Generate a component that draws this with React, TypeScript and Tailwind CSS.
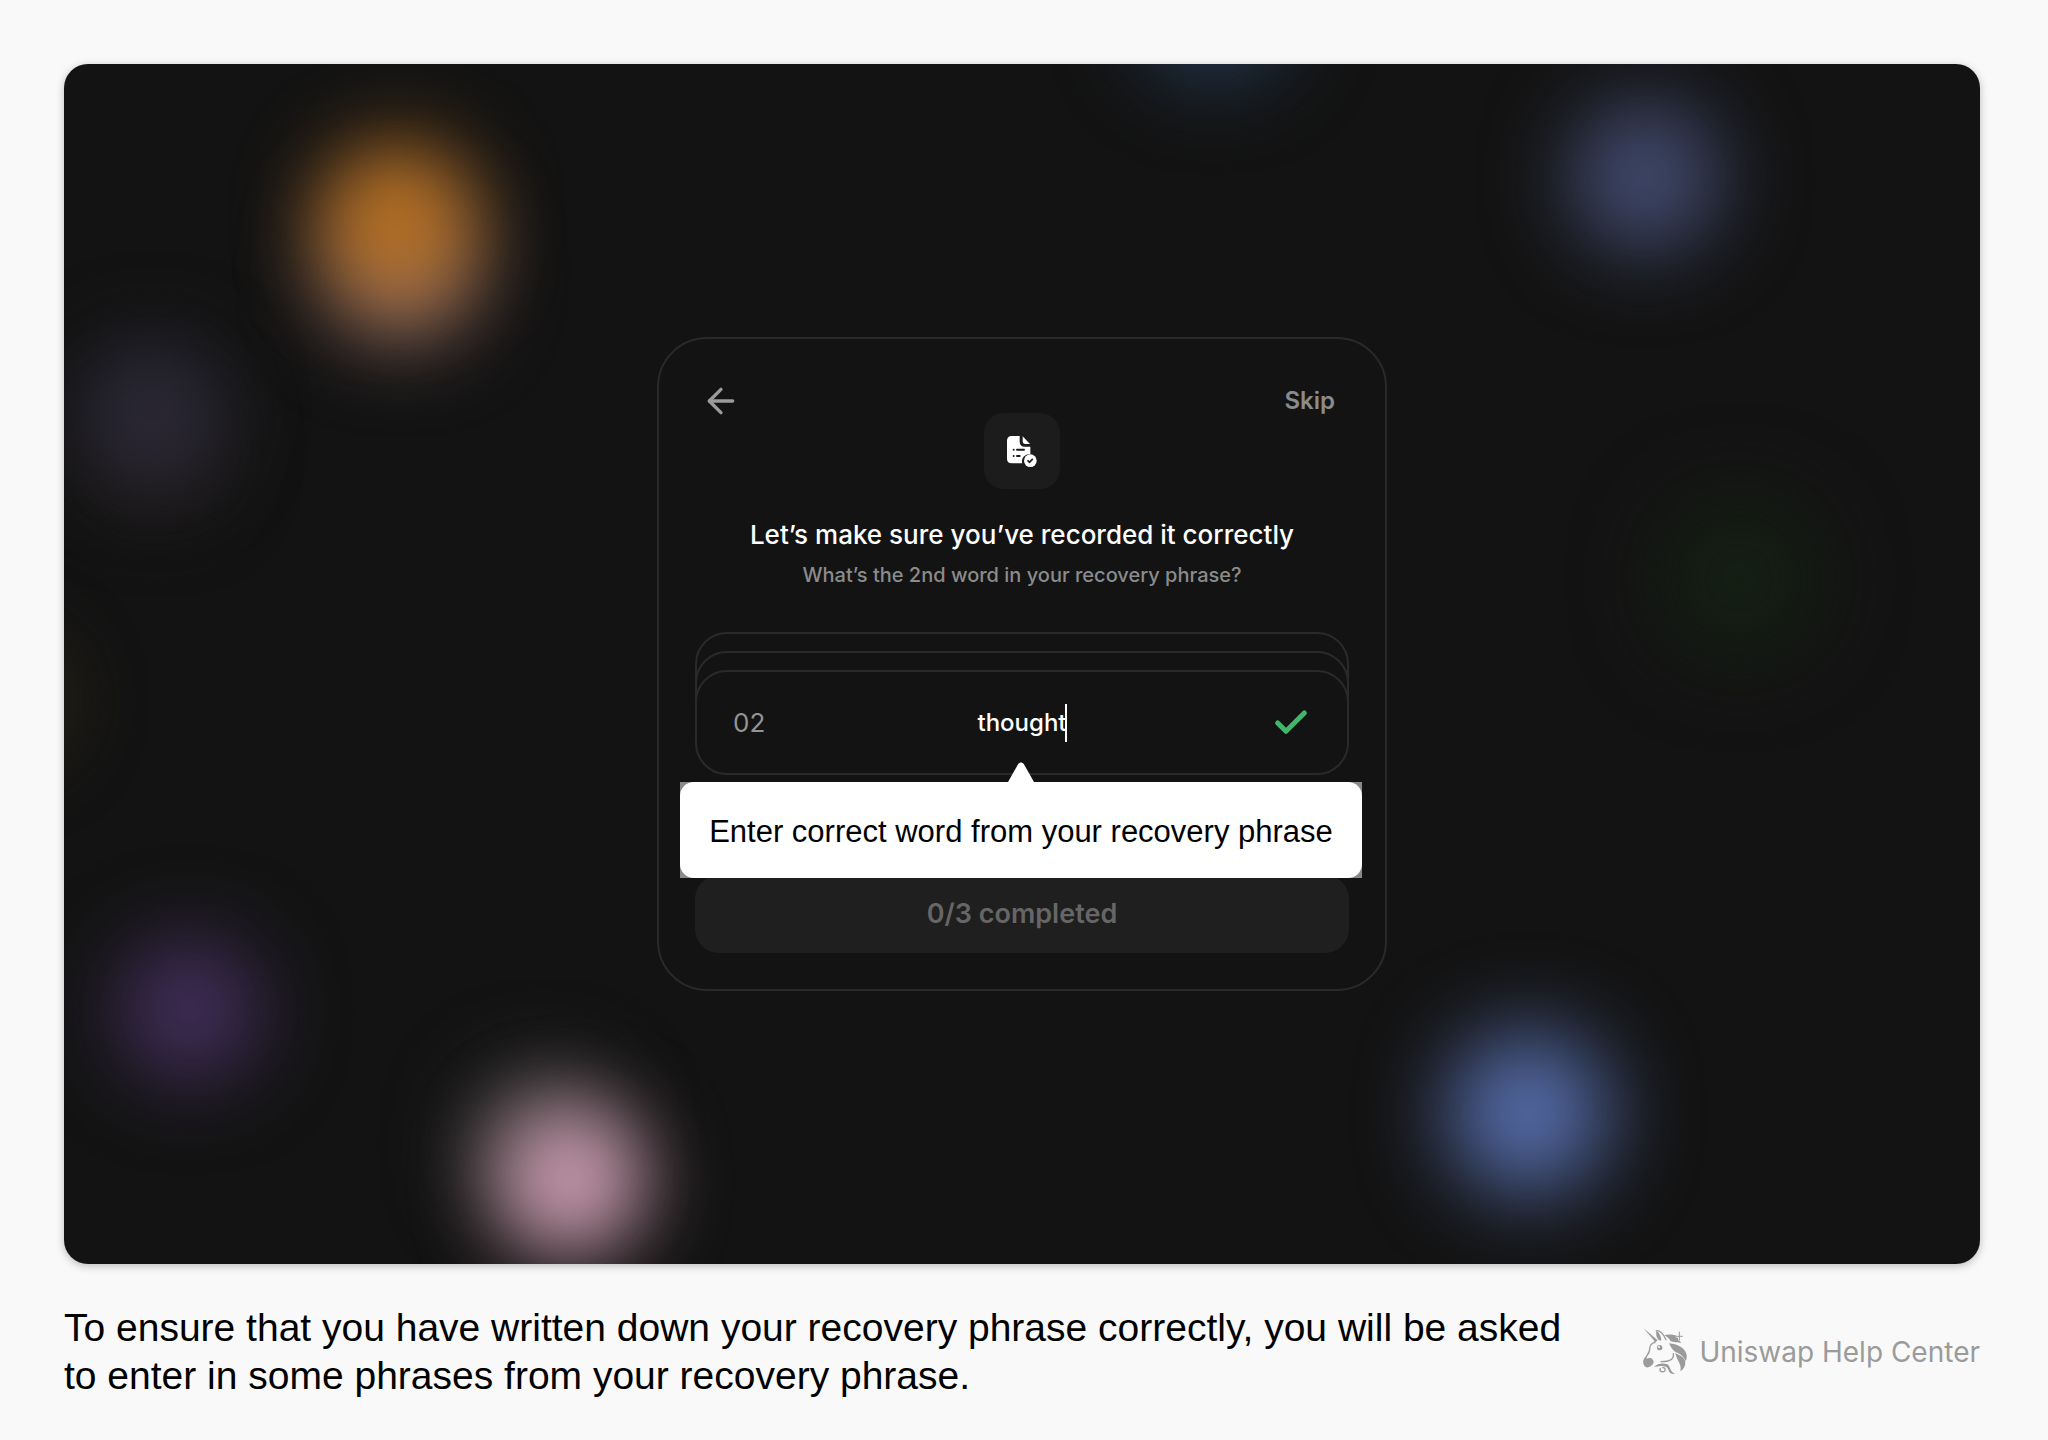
import { ArrowLeft, Check } from 'lucide-react';

function Glow({ className }: { className: string }) {
  return (
    <div
      className={`absolute -translate-x-1/2 -translate-y-1/2 rounded-full ${className}`}
    />
  );
}

function Background() {
  return (
    <div aria-hidden="true" className="absolute inset-0">
      <Glow className="left-[17.6%] top-[17%] size-[140px] bg-[#94706c] blur-[44px]" />
      <Glow className="left-[17.4%] top-[13%] size-[150px] bg-[#c0741f]/95 blur-[42px]" />
      <Glow className="left-[4.8%] top-[32%] size-[120px] bg-[#241e1e] blur-[40px]" />
      <Glow className="left-[4.6%] top-[29%] size-[140px] bg-[#2b2938] blur-[40px]" />
      <Glow className="left-[60%] top-[-5%] size-[160px] bg-[#22364e] blur-[40px]" />
      <Glow className="left-[82.5%] top-[9.4%] size-[150px] bg-[#434c71] blur-[42px]" />
      <Glow className="left-[87.4%] top-[42.8%] size-[150px] bg-[#152113] blur-[44px]" />
      <Glow className="left-[-3%] top-[53%] size-[120px] bg-[#2c2718] blur-[36px]" />
      <Glow className="left-[6.5%] top-[78.8%] size-[140px] bg-[#44305e] blur-[42px]" />
      <Glow className="left-[25%] top-[90%] size-[150px] bg-[#3c3c3a] blur-[40px]" />
      <Glow className="left-[26.4%] top-[93%] size-[150px] bg-[#c799ad] blur-[40px]" />
      <Glow className="left-[76.4%] top-[87.4%] size-[160px] bg-[#5870b0] blur-[44px]" />
    </div>
  );
}

function DocumentCheckIcon() {
  return (
    <svg viewBox="0 0 90 93" className="h-[31px] w-[30px]" aria-hidden="true">
      <path
        fill="#fff"
        d="M14 0h24v17c0 10 6 15 15 15h17v22c-14 0-25 9-25 22 0 2 0 4 1 6H14C5 82 0 77 0 68V14C0 5 5 0 14 0Z"
      />
      <path fill="#fff" d="M47 1 69 24H55c-5 0-8-3-8-8Z" />
      <path
        stroke="#1c1c1c"
        strokeWidth="6"
        strokeLinecap="round"
        d="M20 41h.1M30 41h21M20 60h.1M30 60h8"
      />
      <circle cx="70" cy="74" r="19" fill="#fff" />
      <path
        fill="none"
        stroke="#1c1c1c"
        strokeWidth="5"
        strokeLinecap="round"
        strokeLinejoin="round"
        d="m63 74 4 5 9-9"
      />
    </svg>
  );
}

function UnicornLogo() {
  return (
    <svg viewBox="0 0 132 144" className="h-12 w-11 shrink-0" aria-hidden="true">
      <g fill="#9b9b9b">
        <path d="M1 0 44 37l-11 9c1-4 1-7-1-10Z" />
        <path d="M40 8c10 6 15 17 15 30l-8-2C40 28 38 18 40 8Z" />
        <path d="M63 22c14-4 30-2 39 2 5 5 6 14 13 22-7-3-12-4-16-3-8-2-12-1-16-3-4-8-11-14-20-18Z" />
        <path d="M78 46c25 2 47 12 53 34 1 9-1 15-3 19-7-16-19-23-32-28-8-6-13-14-18-25Z" />
        <path d="M96 75c18 7 31 16 31 29 0 11-6 20-15 26 3-13-1-23-6-31-4-7-6-15-10-24Z" />
        <path d="M6 88c5 4 8 4 14 1 7 1 11 7 12 13-2 8-6 10-9 13-8 5-15 4-19-2C-2 105 0 96 6 88Z" />
        <path d="M33 117c11-12 28-13 40-8 8 5 8 15 13 21 4 5 7 7 11 8-12 2-20-5-22-15-3-6-9-9-15-8-9-3-18 1-27 2Z" />
        <circle cx="50" cy="59" r="8" />
      </g>
      <circle cx="48" cy="57" r="3" fill="#f9f9f9" />
      <g fill="none" stroke="#9b9b9b" strokeWidth="4" strokeLinecap="round">
        <path d="M36 43C24 46 20 53 20 63c1 10-8 18-13 28" />
        <path d="M40 8c12-1 22 12 29 27" />
        <path d="M91 77c3 18-12 24-37 24" />
        <path d="M52 121c-4 8 6 14 13 8 4-5 0-11-6-10" />
        <path stroke="#f9f9f9" strokeWidth="8" d="M109 14v20M102 25h14" />
        <path strokeWidth="3" d="M109 12v24M100 25h18" />
      </g>
    </svg>
  );
}

function Tooltip({ text }: { text: string }) {
  return (
    <div
      role="tooltip"
      className="absolute top-full -right-[15px] -left-[17px] mt-[9px] bg-[#8a8a8a]"
    >
      <svg
        viewBox="0 0 26 20"
        className="absolute bottom-full left-1/2 h-5 w-[26px] -translate-x-1/2"
        aria-hidden="true"
      >
        <path fill="#fff" d="M0 20 9.500 3.200C11 -.5 15 -.5 16.500 3.200L26 20Z" />
      </svg>
      <p className="rounded-[14px] bg-white pt-1 text-center font-['Liberation_Sans',sans-serif] text-[31px] leading-[92px] whitespace-nowrap text-black">
        {text}
      </p>
    </div>
  );
}

function WordInput({ number, word }: { number: string; word: string }) {
  return (
    <div>
      <div className="h-[105px] rounded-[32px] border-2 border-[#2a2a2a] bg-[#131313]" />
      <div className="-mt-[86px] h-[105px] rounded-[32px] border-2 border-[#2a2a2a] bg-[#131313]" />
      <div className="relative -mt-[86px] grid h-[105px] grid-cols-3 items-center rounded-[32px] border-2 border-[#2a2a2a] bg-[#131313] px-9">
        <label htmlFor="word" className="text-[26px] text-[#949494]">
          {number}
        </label>
        <div className="relative flex justify-center">
          <input
            id="word"
            type="text"
            defaultValue={word}
            className="w-full bg-transparent text-center text-2xl font-medium text-white outline-none"
          />
          <span className="absolute top-1/2 left-1/2 ml-[43px] h-[38px] w-0.5 -translate-y-1/2 bg-white" />
        </div>
        <Check className="size-10 justify-self-end text-[#40b66b]" strokeWidth={3} />
        <Tooltip text="Enter correct word from your recovery phrase" />
      </div>
    </div>
  );
}

function RecoveryCard() {
  return (
    <section className="relative w-full max-w-[730px] rounded-[50px] border-2 border-[#2a2a2a] bg-[#131313] px-9 pt-[46px] pb-9">
      <header className="grid grid-cols-[1fr_auto_1fr] items-start px-1.5">
        <button
          type="button"
          aria-label="Back"
          className="flex h-8 items-center justify-self-start text-[#9b9b9b]"
        >
          <ArrowLeft className="size-10" strokeWidth={2} />
        </button>
        <div className="mt-7 grid size-[76px] place-items-center rounded-[20px] bg-[#1c1c1c]">
          <DocumentCheckIcon />
        </div>
        <button
          type="button"
          className="mr-2 justify-self-end text-2xl leading-8 font-semibold text-[#8b8b8b]"
        >
          Skip
        </button>
      </header>

      <h1 className="mt-7 text-center text-[26px] leading-9 font-medium text-white">
        Let’s make sure you’ve recorded it correctly
      </h1>
      <p className="mt-2 mb-[43px] text-center text-xl leading-7 font-medium text-[#8b8b8b]">
        What’s the 2nd word in your recovery phrase?
      </p>

      <WordInput number="02" word="thought" />

      <button
        type="button"
        disabled
        className="mt-[100px] h-[78px] w-full rounded-3xl bg-[#1f1f1f] text-[27px] font-semibold text-[#666666]"
      >
        0/3 completed
      </button>
    </section>
  );
}

export default function App() {
  return (
    <div className="flex min-h-screen flex-col bg-[#f9f9f9] pr-[68px] pl-16 pt-16 font-['Inter','Liberation_Sans',sans-serif]">
      <main className="relative flex flex-1 items-center justify-center overflow-hidden rounded-3xl bg-[#131313] shadow-[0_2px_8px_rgba(0,0,0,0.25)]">
        <Background />
        <RecoveryCard />
      </main>

      <footer className="flex items-center justify-between gap-16 py-10">
        <p className="max-w-[1510px] font-['Liberation_Sans',sans-serif] text-[39px] leading-[48px] text-black">
          To ensure that you have written down your recovery phrase correctly, you will be asked
          to enter in some phrases from your recovery phrase.
        </p>
        <div className="flex shrink-0 items-center gap-3 text-[#9b9b9b]">
          <UnicornLogo />
          <span className="text-[28px] leading-9">Uniswap Help Center</span>
        </div>
      </footer>
    </div>
  );
}
